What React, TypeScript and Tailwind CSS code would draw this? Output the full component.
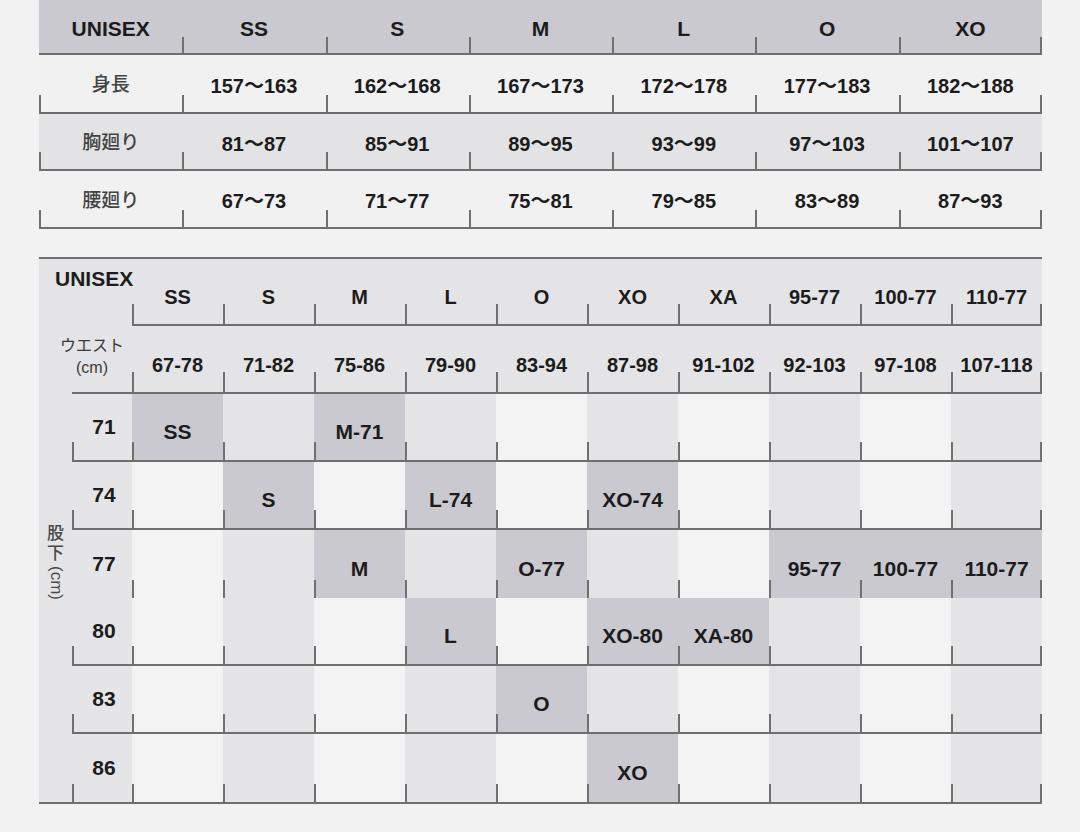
import clsx from "clsx";

const topHead = ["UNISEX", "SS", "S", "M", "L", "O", "XO"];

const topRows = [
  {
    label: "身長",
    vals: ["157〜163", "162〜168", "167〜173", "172〜178", "177〜183", "182〜188"],
    bg: "bg-[#f1f1f1]",
    h: "h-[59px]",
  },
  {
    label: "胸廻り",
    vals: ["81〜87", "85〜91", "89〜95", "93〜99", "97〜103", "101〜107"],
    bg: "bg-[#e3e3e5]",
    h: "h-[57px]",
  },
  {
    label: "腰廻り",
    vals: ["67〜73", "71〜77", "75〜81", "79〜85", "83〜89", "87〜93"],
    bg: "bg-[#f1f1f1]",
    h: "h-[58px]",
  },
];

const sizes = ["SS", "S", "M", "L", "O", "XO", "XA", "95-77", "100-77", "110-77"];
const waist = ["67-78", "71-82", "75-86", "79-90", "83-94", "87-98", "91-102", "92-103", "97-108", "107-118"];

// every other size column is a shade darker
const shaded = [false, true, false, true, false, true, false, true, false, true];

const body: { len: string; line: boolean; leftTick: boolean; cells: Record<number, string> }[] = [
  { len: "71", line: true, leftTick: true, cells: { 0: "SS", 2: "M-71" } },
  { len: "74", line: true, leftTick: true, cells: { 1: "S", 3: "L-74", 5: "XO-74" } },
  { len: "77", line: false, leftTick: false, cells: { 2: "M", 4: "O-77", 7: "95-77", 8: "100-77", 9: "110-77" } },
  { len: "80", line: true, leftTick: true, cells: { 3: "L", 5: "XO-80", 6: "XA-80" } },
  { len: "83", line: true, leftTick: true, cells: { 4: "O" } },
  { len: "86", line: false, leftTick: true, cells: { 5: "XO" } },
];

function Tick({ right = false, tall = "h-[18px]" }: { right?: boolean; tall?: string }) {
  return (
    <span
      className={clsx("absolute bottom-0 w-[2px] bg-[#707070]", right ? "right-0" : "left-0", tall)}
    />
  );
}

function TopTable() {
  return (
    <div className="w-[1003px]">
      {/* header */}
      <div className="grid h-[55px] grid-cols-7 border-b-2 border-[#6f6f6f] bg-[#c9c9cf]">
        {topHead.map((h, i) => (
          <div key={h} className="relative flex items-center justify-center pt-1 text-[21px] font-bold text-[#1c1c1c]">
            {h}
            {i > 0 && <Tick tall="h-[16px]" />}
            {i === topHead.length - 1 && <Tick right tall="h-[16px]" />}
          </div>
        ))}
      </div>

      {topRows.map((r) => (
        <div key={r.label} className={clsx("grid grid-cols-7 border-b-2 border-[#6f6f6f]", r.bg, r.h)}>
          <div className="relative flex items-center justify-center pt-1 text-[19px] font-medium text-[#444]">
            {r.label}
            <Tick tall="h-[17px]" />
          </div>
          {r.vals.map((v, i) => (
            <div key={v} className="relative flex items-center justify-center pt-1 text-[20px] font-bold text-[#1c1c1c]">
              {v}
              <Tick tall="h-[17px]" />
              {i === r.vals.length - 1 && <Tick right tall="h-[17px]" />}
            </div>
          ))}
        </div>
      ))}
    </div>
  );
}

function PantsTable() {
  return (
    <div className="mt-[28px] grid w-[1003px] grid-cols-[33px_60px_repeat(10,91px)] grid-rows-[67px_68px_repeat(6,68px)] border-y-2 border-[#6f6f6f] bg-[#e4e4e6]">
      {/* size names */}
      <div className="col-span-2 whitespace-nowrap pl-[16px] pt-[6px] text-[21px] font-bold leading-7 text-[#1c1c1c]">
        UNISEX
      </div>
      {sizes.map((s, i) => (
        <div
          key={s}
          className="relative flex items-end justify-center border-b-2 border-[#6f6f6f] pb-[15px] text-[20px] font-bold leading-6 text-[#1c1c1c]"
        >
          {s}
          <Tick tall="h-[20px]" />
          {i === sizes.length - 1 && <Tick right tall="h-[20px]" />}
        </div>
      ))}

      {/* waist */}
      <div />
      <div className="flex flex-col items-center whitespace-nowrap border-b-2 border-[#6f6f6f] pr-5 pt-[9px] text-[16px] leading-[22px] text-[#3a3a3a]">
        <span>ウエスト</span>
        <span>(cm)</span>
      </div>
      {waist.map((w, i) => (
        <div
          key={w}
          className="relative flex items-end justify-center whitespace-nowrap border-b-2 border-[#6f6f6f] pb-[15px] text-[20px] font-bold leading-6 text-[#1c1c1c]"
        >
          {w}
          <Tick tall="h-[20px]" />
          {i === waist.length - 1 && <Tick right tall="h-[20px]" />}
        </div>
      ))}

      {/* inseam label strip */}
      <div className="row-span-6 flex flex-col items-center pt-[130px] text-[17px] font-medium leading-[20px] text-[#4a4a4a]">
        <span>股</span>
        <span>下</span>
        <span className="mt-[2px] [writing-mode:vertical-rl]">(cm)</span>
      </div>

      {body.map((r, ri) => [
        <div
          key={r.len}
          className={clsx(
            "relative flex items-center justify-center bg-[#e5e5e7] pl-1 text-[21px] font-bold text-[#1c1c1c]",
            r.line && "border-b-2 border-[#6f6f6f]"
          )}
        >
          {r.len}
          {r.leftTick && <Tick />}
        </div>,
        ...sizes.map((s, ci) => {
          const val = r.cells[ci];
          return (
            <div
              key={`${ri}-${s}`}
              className={clsx(
                "relative flex items-center justify-center whitespace-nowrap pt-[10px] text-[21px] font-bold text-[#1c1c1c]",
                val ? "bg-[#c9c9cf]" : shaded[ci] ? "bg-[#e4e4e6]" : "bg-[#f3f3f3]",
                r.line && "border-b-2 border-[#6f6f6f]"
              )}
            >
              {val}
              <Tick />
              {ci === sizes.length - 1 && <Tick right />}
            </div>
          );
        }),
      ])}
    </div>
  );
}

export default function App() {
  return (
    <div className="min-h-[832px] bg-[#f2f2f2] pl-[39px] font-['Liberation_Sans','Noto_Sans_CJK_JP',sans-serif]">
      <TopTable />
      <PantsTable />
    </div>
  );
}
